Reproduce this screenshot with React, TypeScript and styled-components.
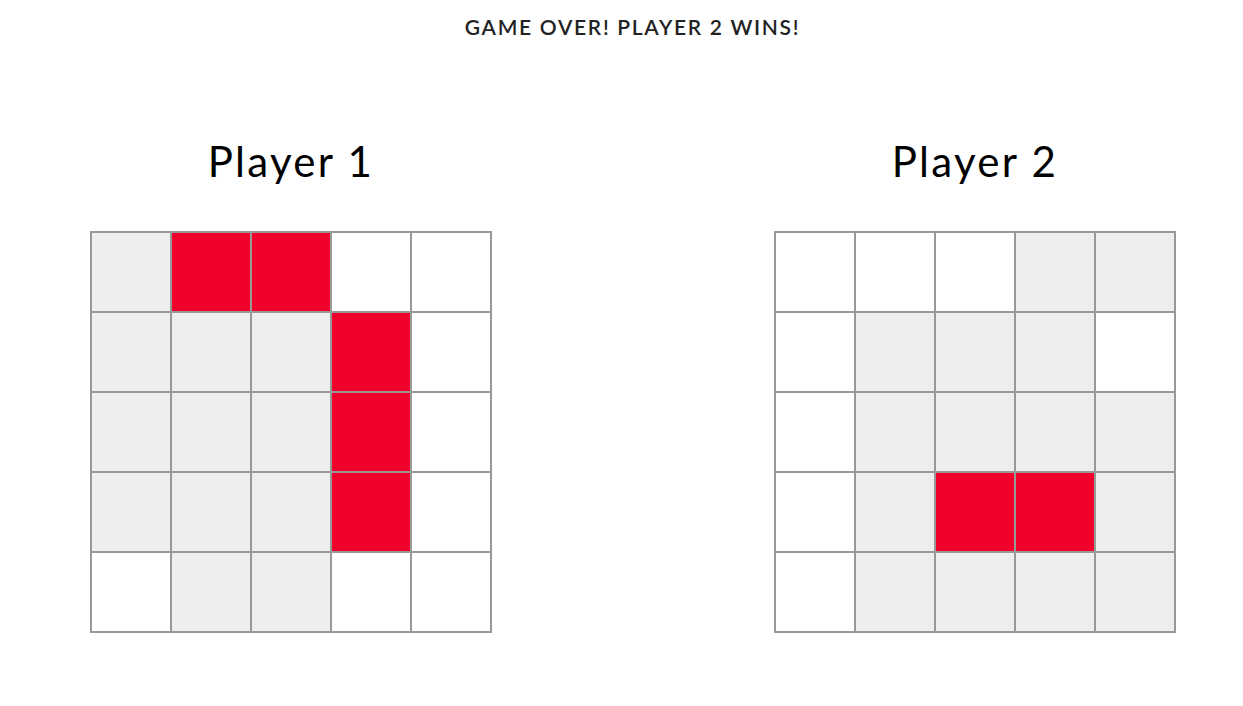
import styled, { createGlobalStyle } from "styled-components";

type Cell = "w" | "g" | "r";

// Поля игроков по строкам: w — пусто, g — открыто, r — попадание
const boards: { name: string; rows: Cell[][] }[] = [
    {
        name: "Player 1",
        rows: [
            ["g", "r", "r", "w", "w"],
            ["g", "g", "g", "r", "w"],
            ["g", "g", "g", "r", "w"],
            ["g", "g", "g", "r", "w"],
            ["w", "g", "g", "w", "w"],
        ],
    },
    {
        name: "Player 2",
        rows: [
            ["w", "w", "w", "g", "g"],
            ["w", "g", "g", "g", "w"],
            ["w", "g", "g", "g", "g"],
            ["w", "g", "r", "r", "g"],
            ["w", "g", "g", "g", "g"],
        ],
    },
];

const colors: Record<Cell, string> = {
    w: "#ffffff",
    g: "#eeeeee",
    r: "#f0002b",
};

export default function App() {
    return (
        <>
            <GlobalStyle />
            <Page>
                <Status>GAME OVER! PLAYER 2 WINS!</Status>
                <Boards>
                    {boards.map((board) => (
                        <Column key={board.name}>
                            <PlayerName>{board.name}</PlayerName>
                            <Grid>
                                {board.rows.flat().map((cell, i) => (
                                    <Square key={i} kind={cell} />
                                ))}
                            </Grid>
                        </Column>
                    ))}
                </Boards>
            </Page>
        </>
    );
}

const GlobalStyle = createGlobalStyle`
    body {
        margin: 0;
        background: #ffffff;
        font-family: Lato, "Noto Sans", sans-serif;
        color: #111111;
    }
`

const Page = styled.div`
    width: 1243px;
    height: 706px;
    overflow: hidden;
`

// Строка статуса игры
const Status = styled.div`
    padding: 15px 0 0 22px;
    text-align: center;
    font-size: 21px;
    line-height: 24px;
    font-weight: 600;
    color: #222222;
    letter-spacing: 1.7px;
`

const Boards = styled.div`
    display: flex;
    gap: 282px;
    padding: 0 0 0 90px;
    margin-top: 97px;
`

const Column = styled.div`
    display: flex;
    flex-direction: column;
    align-items: center;
    width: 402px;
`

const PlayerName = styled.div`
    font-size: 42px;
    line-height: 50px;
    font-weight: 400;
    color: #000000;
    letter-spacing: 2.3px;
    margin-bottom: 45px;
`

const Grid = styled.div`
    display: grid;
    grid-template-columns: repeat(5, 80px);
    grid-auto-rows: 80px;
    border: 1px solid #999999;
`

const Square = styled.div<{ kind: Cell }>`
    box-sizing: border-box;
    border: 1px solid #999999;
    background: ${(p) => colors[p.kind]};
`
